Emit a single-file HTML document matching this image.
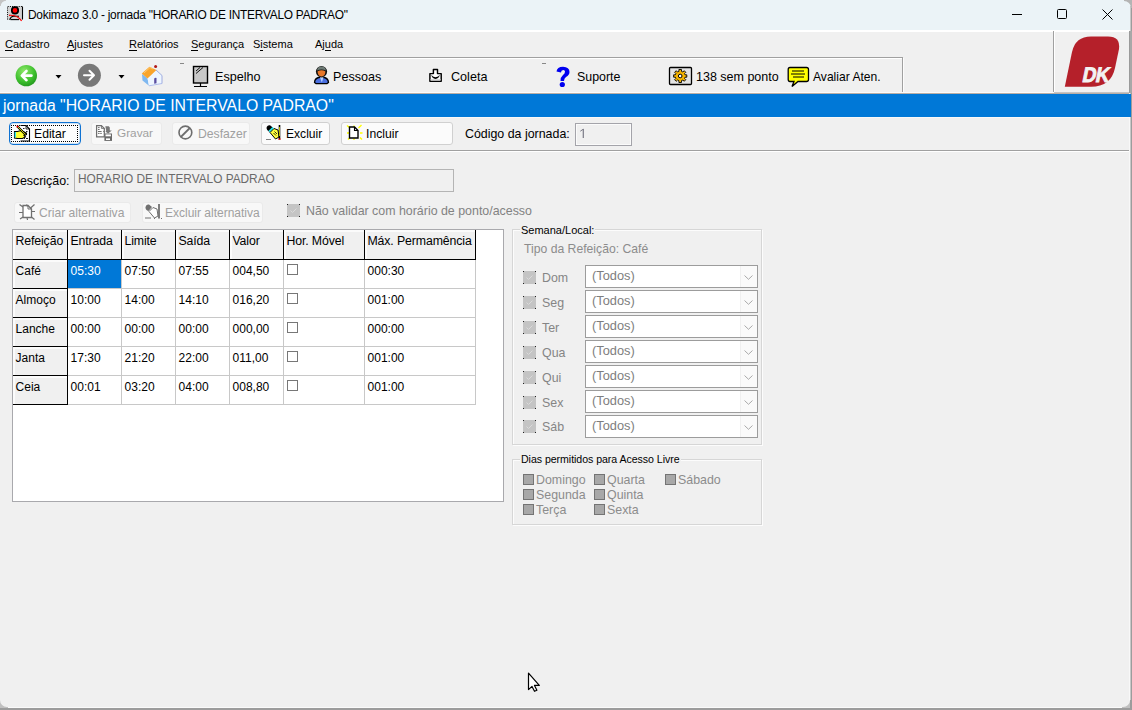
<!DOCTYPE html>
<html><head><meta charset="utf-8">
<style>
*{margin:0;padding:0;box-sizing:border-box}
html,body{width:1132px;height:710px;overflow:hidden;background:#f0f0f0}
body{position:relative;font-family:"Liberation Sans",sans-serif;font-size:12px;color:#000}
.a{position:absolute;white-space:nowrap}
svg{position:absolute;overflow:visible}
.mi{font-size:11px;top:38px}
.mi u{text-decoration:none;border-bottom:1px solid #000}
.tb{font-size:12.6px;top:70px}
.btn{position:absolute;height:23px;border:1px solid #d0d0d0;background:#fbfbfb;border-radius:3px}
.btn.dis{border-color:#eaeaea;background:#f8f8f8}
.gb{position:absolute;border:1px solid #d6d6d6;box-shadow:1px 1px 0 #fcfcfc,inset 1px 1px 0 #fcfcfc}
.cap{position:absolute;font-size:11px;background:#f0f0f0;padding:0 1px;white-space:nowrap}
.dis{color:#a0a0a0}
.cb{position:absolute;width:11px;height:11px;border:1px solid #777;background:#fff}
.combo{position:absolute;left:585px;width:173px;height:23px;background:#fff;border:1px solid #9c9c9c}
.combo span{position:absolute;left:6px;top:2px;color:#7e7e7e;font-size:12.8px}
.combo i{position:absolute;right:0;top:0;width:17px;height:21px;border-left:1px solid #f0f0f0;background:#fafafa}
.dchk{position:absolute;left:523px;width:13px;height:13px;background:#c4c4c4}
.dlab{position:absolute;left:542px;color:#858585;font-size:12.4px}
.ac{position:absolute;width:11px;height:11px;background:#a8a8a8;border:1px solid #747474}
.al{position:absolute;color:#8c8c8c;font-size:12.4px;white-space:nowrap}
</style></head><body>
<div class="a" style="left:0;top:0;width:1132px;height:30px;background:#ebf3f7"></div>
<svg style="left:6px;top:5px" width="18" height="17" viewBox="0 0 18 17">
<rect x="1.5" y="1.5" width="15" height="13.5" fill="#d2d2d2"/>
<path d="M1.5 14.5 V1.5 H16" fill="none" stroke="#000" stroke-width="1" stroke-dasharray="1 1.2"/>
<path d="M16.5 1.5 V14.5" stroke="#000" stroke-width="1.1"/>
<circle cx="9" cy="5.4" r="3.2" fill="#f00" stroke="#000" stroke-width="1.7"/>
<path d="M3.6 14.8 Q5 11.4 7.5 11.3 H13" fill="none" stroke="#000" stroke-width="1.1"/>
<path d="M4.5 14.6 H13" stroke="#000" stroke-width="1.1"/>
<path d="M3 10.3 Q11 9.6 15.6 15.8" fill="none" stroke="#f00" stroke-width="1.2"/>
</svg>
<div class="a" style="left:28px;top:8.2px;font-size:11.9px;letter-spacing:-0.24px">Dokimazo 3.0 - jornada "HORARIO DE INTERVALO PADRAO"</div>
<div class="a" style="left:1012px;top:14px;width:10px;height:1px;background:#000"></div>
<div class="a" style="left:1057px;top:9px;width:10px;height:10px;border:1px solid #000;border-radius:1.5px"></div>
<svg style="left:1102px;top:9px" width="11" height="11" viewBox="0 0 11 11"><path d="M0.5 0.5 L10.5 10.5 M10.5 0.5 L0.5 10.5" stroke="#000" stroke-width="1"/></svg>
<div class="a" style="left:0;top:30px;width:1132px;height:1.6px;background:#fff"></div>
<div class="a mi" style="left:5px"><u>C</u>adastro</div>
<div class="a mi" style="left:67px"><u>A</u>justes</div>
<div class="a mi" style="left:129px"><u>R</u>elatórios</div>
<div class="a mi" style="left:191px"><u>S</u>egurança</div>
<div class="a mi" style="left:253px">S<u>i</u>stema</div>
<div class="a mi" style="left:315px">Aj<u>u</u>da</div>
<div class="a" style="left:0;top:57px;width:903px;height:37px;border-top:1px solid #a0a0a0;border-right:1px solid #a0a0a0"></div>
<div class="a" style="left:903px;top:58px;width:1px;height:35px;background:#fcfcfc"></div>
<div class="a" style="left:0;top:58px;width:902px;height:1px;background:#fff"></div>
<div class="a" style="left:1053px;top:31px;width:77px;height:63px;border-left:1px solid #a0a0a0"></div>
<div class="a" style="left:1054px;top:31px;width:1px;height:62px;background:#fff"></div>
<svg style="left:15px;top:64px" width="23" height="23" viewBox="0 0 23 23">
<defs><radialGradient id="gg" cx="0.4" cy="0.3" r="0.8"><stop offset="0" stop-color="#8fe86a"/><stop offset="0.6" stop-color="#3cbf2c"/><stop offset="1" stop-color="#1c8c1a"/></radialGradient></defs>
<circle cx="11.3" cy="11.6" r="10.7" fill="url(#gg)"/>
<path d="M16.5 11.6 H7.5 M11.5 7 L6.8 11.6 L11.5 16.2" fill="none" stroke="#fff" stroke-width="2.6" stroke-linecap="round" stroke-linejoin="round"/>
</svg>
<svg style="left:55px;top:75px" width="7" height="4" viewBox="0 0 7 4"><path d="M0.5 0 H6.5 L3.5 3.5 Z" fill="#000"/></svg>
<svg style="left:77px;top:63px" width="24" height="24" viewBox="0 0 24 24">
<circle cx="12.4" cy="12.3" r="11.5" fill="#787878"/>
<path d="M7 12.3 H16.5 M12.5 7.8 L17 12.3 L12.5 16.8" fill="none" stroke="#fff" stroke-width="2" stroke-linecap="round" stroke-linejoin="round"/>
</svg>
<svg style="left:118px;top:75px" width="7" height="4" viewBox="0 0 7 4"><path d="M0.5 0 H6.5 L3.5 3.5 Z" fill="#000"/></svg>
<svg style="left:140px;top:64px" width="24" height="24" viewBox="0 0 24 24">
<path d="M2 10 L7.5 14.2 L9 21.8 L2.5 16.5 Z" fill="#7fb8f0"/>
<path d="M7.5 14.2 L16 6 L22 11.5 L22 19.5 L9 21.8 Z" fill="#eef6ff"/>
<path d="M16 6 L22 11.5 L22 19.5" fill="none" stroke="#8a9ad8" stroke-width="0.8"/>
<path d="M9 21.8 L22 19.5" fill="none" stroke="#9fb0e8" stroke-width="0.8"/>
<path d="M1.8 9.6 L9.4 2.7 L16.4 5.9 L7.5 14.5 Z" fill="#f9a52c"/>
<path d="M4 9 L10 3.5 L13 5" fill="none" stroke="#ffc870" stroke-width="1"/>
<circle cx="15.6" cy="2.6" r="1.5" fill="#b01818"/>
<path d="M14.2 14.5 Q15.3 13.5 16.5 14 V19.3 L14.2 19.8 Z" fill="#5a4ea0"/>
</svg>
<div class="a" style="left:180px;top:63px;width:4px;height:1px;background:#888"></div>
<div class="a" style="left:542px;top:63px;width:4px;height:1px;background:#888"></div>
<svg style="left:192px;top:65px" width="17" height="23" viewBox="0 0 17 23">
<rect x="1.5" y="1.5" width="14" height="16.5" fill="#c8c8c8" stroke="#000" stroke-width="1.4"/>
<path d="M4 6 L8 2.5 M4 8.5 L11 2.5" stroke="#000" stroke-width="0.9"/>
<path d="M8.5 18 V21.5 M2 21.5 H15" stroke="#000" stroke-width="1.2"/>
</svg>
<svg style="left:313px;top:65px" width="17" height="20" viewBox="0 0 17 20">
<path d="M1.5 17.5 Q1.5 12.5 8.5 12 Q15.5 12.5 15.5 17.5 L14 18.6 H3 Z" fill="#4a6fe0" stroke="#000" stroke-width="1.3"/>
<path d="M7 12.2 L8.8 17.5 L10.5 12.2 Z" fill="#b8d4ff"/>
<circle cx="8.5" cy="6.6" r="5.6" fill="#111"/>
<path d="M4 5.6 Q4.5 1.8 8.5 1.6 Q12.5 1.8 13 5.6 Q8.5 3.6 4 5.6 Z" fill="#6e7a74"/>
<path d="M4.6 6.2 Q8.5 4.5 12.4 6.2 Q12.6 11.2 8.5 11.4 Q4.4 11.2 4.6 6.2 Z" fill="#e8782a"/>
</svg>
<svg style="left:428px;top:68px" width="15" height="15" viewBox="0 0 15 15">
<path d="M5.4 1.5 H9.5 V5.6 H13.2 V13.2 H1.9 V5.6 H5.4 Z" fill="#fff" stroke="#000" stroke-width="1.45" stroke-linejoin="round"/>
<rect x="2.6" y="11" width="9.9" height="1.6" fill="#d8d8d8"/>
<path d="M3.3 6.8 Q4 10.8 7.5 11 Q11 10.8 11.8 6.8 Q10.5 9.2 7.5 9.2 Q4.6 9.2 3.3 6.8 Z" fill="#000"/>
</svg>
<svg style="left:555px;top:66px" width="16" height="22" viewBox="0 0 16 22">
<path d="M1.5 5.5 Q2 0.8 8 0.8 Q14.5 1 14.5 6 Q14.5 9 11 11 Q9 12.3 9 15 H5.5 Q5.5 11 8 9 Q10 7.5 10 5.5 Q10 4 8.2 4 Q6 4 6 6.5 Z" fill="#0000f0"/>
<circle cx="7.3" cy="18.5" r="2.6" fill="#0000f0"/>
</svg>
<svg style="left:668px;top:66px" width="25" height="20" viewBox="0 0 25 20">
<rect x="1.5" y="1.5" width="22" height="17" rx="1" fill="#e4e4e4" stroke="#000" stroke-width="1.3"/>
<g transform="translate(12.2 10)">
<g fill="#f5b400" stroke="#000" stroke-width="0.9">
<path d="M-1.3 -6.5 H1.3 V-4.6 L2.7 -4 L4 -5.3 L5.6 -3.7 L4.3 -2.4 L4.8 -1.2 H6.6 V1.2 H4.8 L4.3 2.4 L5.6 3.7 L4 5.3 L2.7 4 L1.3 4.6 V6.5 H-1.3 V4.6 L-2.7 4 L-4 5.3 L-5.6 3.7 L-4.3 2.4 L-4.8 1.2 H-6.6 V-1.2 H-4.8 L-4.3 -2.4 L-5.6 -3.7 L-4 -5.3 L-2.7 -4 L-1.3 -4.6 Z"/>
</g>
<circle r="1.8" fill="#fff" stroke="#000" stroke-width="1"/>
</g>
</svg>
<svg style="left:787px;top:66px" width="23" height="22" viewBox="0 0 23 22">
<path d="M3 1.5 H19.5 Q21.5 1.5 21.5 3.5 V13.5 Q21.5 15.5 19.5 15.5 H11 L5 20.5 L7 15.5 H3 Q1.2 15.5 1.2 13.5 V3.5 Q1.2 1.5 3 1.5 Z" fill="#ffff00" stroke="#000" stroke-width="1.3"/>
<path d="M5 5 H17 M4 8 H18 M6 11 H17" stroke="#000" stroke-width="1"/>
</svg>
<div class="a tb" style="left:215px;font-size:12.6px">Espelho</div>
<div class="a tb" style="left:333px;font-size:12.6px">Pessoas</div>
<div class="a tb" style="left:451px;font-size:12.6px">Coleta</div>
<div class="a tb" style="left:577px;font-size:12.4px">Suporte</div>
<div class="a tb" style="left:696px;font-size:12.5px">138 sem ponto</div>
<div class="a tb" style="left:813px;font-size:12.1px">Avaliar Aten.</div>
<svg style="left:1060px;top:34px" width="64" height="56" viewBox="0 0 64 56">
<path d="M4.8 52.8 L12 18 Q15.5 2.6 31 2.6 H48 Q60.5 2.6 59 15 L55 34 Q51 52.8 31 52.8 Z" fill="#b5202a"/>
<text x="0" y="0" transform="translate(21.5 48) scale(0.9 1) skewX(-13)" font-family="Liberation Sans" font-weight="bold" font-size="21" fill="#f2f2f2" stroke="#f2f2f2" stroke-width="0.9" letter-spacing="-0.3">DK</text>
</svg>
<div class="a" style="left:0;top:92px;width:1130px;height:1px;background:#fafafa"></div>
<div class="a" style="left:0;top:93px;width:1131px;height:1px;background:#b9aea6"></div>
<div class="a" style="left:0;top:94px;width:1131px;height:23px;background:#0078d7"></div>
<div class="a" style="left:0;top:117px;width:1130px;height:1px;background:#f8f8f8"></div>
<div class="a" style="left:3px;top:97px;color:#fff;font-size:15.8px">jornada "HORARIO DE INTERVALO PADRAO"</div>
<div class="btn" style="left:9px;top:122px;width:72px;border:1px solid #0f72d2;box-shadow:inset 0 0 0 1px rgba(40,130,220,0.22);background:#fdfdfd;border-radius:4px"></div>
<div class="a" style="left:11px;top:125px;width:67px;height:17px;border:1px dotted #000"></div>
<svg style="left:13px;top:124px" width="20" height="19" viewBox="0 0 20 19">
<path d="M7.5 1.5 H13 L16.5 5 V17 H7.5" fill="#fff" stroke="#000" stroke-width="1.1"/>
<path d="M13 1.5 V5 H16.5" fill="none" stroke="#000" stroke-width="0.8"/>
<path d="M10 4.5 H11.5 M13 7.5 H14.5 M11 14.5 H12 M13 14.5 H15" stroke="#000" stroke-width="0.9"/>
<path d="M1.5 7.5 H4.5 L8 6.5 L13.5 9 L13.5 10.5 L11 11.3 L12.5 12.8 L9.5 14.5 H4.5 L1.5 14 Z" fill="#ffff30" stroke="#000" stroke-width="1.1"/>
<rect x="1.6" y="8" width="1.4" height="5.5" fill="#30e8f0"/>
<path d="M4.2 2.2 L13 11" stroke="#000" stroke-width="2.2"/>
<path d="M4.8 2.8 L12.5 10.5" stroke="#ffff00" stroke-width="0.8"/>
<circle cx="4.4" cy="2.4" r="1" fill="#f00"/>
</svg>
<div class="a" style="left:34px;top:127px;font-size:12.2px">Editar</div>
<div class="btn dis" style="left:91px;top:122px;width:71px"></div>
<svg style="left:95px;top:124px" width="19" height="19" viewBox="0 0 19 19">
<path d="M1.6 1.6 H6.4 L9.3 4.4 V12.8 H1.6 Z" fill="#fff" stroke="#6e6e6e" stroke-width="1.25"/>
<path d="M6.4 1.6 V4.4 H9.3" fill="none" stroke="#6e6e6e" stroke-width="0.9"/>
<path d="M3 3.6 H4.6 M3 5.5 H4.6 M3 7.5 H6.6 M8 7.5 H8.8 M3 9.4 H4.6 M5.2 9.4 H6.8" stroke="#6e6e6e" stroke-width="1"/>
<path d="M10.3 2.2 H13.8 L14.8 3.5 V6.6 H16.8 L13.2 9.6 L10.6 7.8 L11.2 6.6 Z" fill="#777"/>
<rect x="9.4" y="9.5" width="7.6" height="7.4" fill="#6a6a6a"/>
<rect x="10.5" y="10.4" width="5.4" height="1.9" fill="#fff"/>
<rect x="11" y="14.4" width="4" height="1.6" fill="#fff"/>
</svg>
<div class="a dis" style="left:117px;top:126px;font-size:11.8px">Gravar</div>
<div class="btn dis" style="left:172px;top:122px;width:78px"></div>
<svg style="left:177px;top:125px" width="17" height="16" viewBox="0 0 17 16">
<circle cx="8.4" cy="7.5" r="6.4" fill="none" stroke="#6e6e6e" stroke-width="1.6"/>
<path d="M12.8 3 L3.8 12" stroke="#6e6e6e" stroke-width="1.8"/>
</svg>
<div class="a dis" style="left:198px;top:127px;font-size:12.2px">Desfazer</div>
<div class="btn" style="left:261px;top:122px;width:69px"></div>
<svg style="left:265px;top:124px" width="17" height="17" viewBox="0 0 17 17">
<path d="M1.5 4 Q2 1 5 1.3 L8 3.8 L4.5 8 Q1.5 6.5 1.5 4 Z" fill="#000"/>
<path d="M3.5 6.8 L7.5 3 L9 4.5 L5 8.5 Z" fill="#20e8f0"/>
<path d="M5 8.5 L9 4.5 L13 6 L14 13 L10.5 15 Z" fill="#ffff40" stroke="#000" stroke-width="1"/>
<path d="M14.5 1 V15.5" stroke="#000" stroke-width="1.6"/>
<path d="M14.5 3 V12" stroke="#ffff00" stroke-width="0.7"/>
<path d="M8.5 9 L11 11.5 M9.5 7.5 L12 10" stroke="#000" stroke-width="0.8"/>
<path d="M1 15.5 H6" stroke="#808080" stroke-width="1"/>
<rect x="13.4" y="14.5" width="2.2" height="1.2" fill="#f00"/>
</svg>
<div class="a" style="left:286px;top:127px;font-size:12.1px">Excluir</div>
<div class="btn" style="left:341px;top:122px;width:112px"></div>
<svg style="left:345px;top:124px" width="20" height="18" viewBox="0 0 20 18">
<path d="M2 1.5 L5 4 M9 1.5 V3 M16.5 1 L13.5 4 M2 9 H4.5 M15 9 H17.5 M3 15.5 L5 13.5 M9 14.5 V16 M15 13.5 L17 15.5" stroke="#ffff00" stroke-width="1.4"/>
<path d="M4.5 3 H9.5 L13 6.5 V14 H4.5 Z" fill="#fff" stroke="#000" stroke-width="1.4"/>
<path d="M9.5 3 V6.5 H13" fill="none" stroke="#000" stroke-width="1.1"/>
</svg>
<div class="a" style="left:366px;top:127px;font-size:12.2px">Incluir</div>
<div class="a" style="left:465px;top:127px;font-size:12.4px">Código da jornada:</div>
<div class="a" style="left:575px;top:123px;width:57px;height:23px;border:1px solid #a4a4aa;background:#f0f0f0;box-shadow:inset 0 0 0 1px #fbfbfb"></div>
<svg style="left:579px;top:128px" width="8" height="12" viewBox="0 0 8 12"><path d="M4.3 1 V10" stroke="#7a7a86" stroke-width="1.2"/><path d="M1.3 3.2 L4.3 1.2" stroke="#7a7a86" stroke-width="1"/></svg>
<div class="a" style="left:0;top:150px;width:1130px;height:1px;background:#a0a0a0"></div>
<div class="a" style="left:0;top:151px;width:1130px;height:1px;background:#fff"></div>
<div class="a" style="left:11px;top:174px;font-size:12.4px">Descrição:</div>
<div class="a" style="left:74px;top:169px;width:380px;height:23px;border:1px solid #b4b4b4;background:#f0f0f0"></div>
<div class="a" style="left:78px;top:172px;color:#6a6a6a;font-size:11.85px">HORARIO DE INTERVALO PADRAO</div>
<div class="btn dis" style="left:14px;top:202px;width:117px;height:21px"></div>
<svg style="left:17px;top:203px" width="20" height="19" viewBox="0 0 20 19">
<path d="M6 2.5 H11 L14.5 6 V14.5 H6 Z" fill="#fff" stroke="#707070" stroke-width="1.3"/>
<path d="M11 2.5 V6 H14.5" fill="none" stroke="#707070" stroke-width="1"/>
<path d="M2.5 1.5 L6 4 M9.5 1.5 L10.5 3.5 M17.5 1.5 L13 5.5 M2 9.5 H6 M14.5 8.5 H18 M3 16 L6 14 M10 14.5 L10.5 17 M14.5 14 L17.5 16.5" stroke="#707070" stroke-width="1.2"/>
</svg>
<div class="a dis" style="left:39px;top:206px;font-size:12.1px">Criar alternativa</div>
<div class="btn dis" style="left:142px;top:202px;width:121px;height:21px"></div>
<svg style="left:144px;top:203px" width="19" height="17" viewBox="0 0 19 17">
<path d="M1.5 4.5 Q2 1 5 1.5 L8 4 L4.5 8 Q1.5 7 1.5 4.5 Z" fill="#707070"/>
<path d="M5 8.5 L9 4.5 L13 6 L14 13 L10.5 15 Z" fill="#fff" stroke="#707070" stroke-width="1"/>
<path d="M15 1 V15.5" stroke="#707070" stroke-width="1.8"/>
<path d="M1 15 H7 M10 15.5 H11 M17 15.5 H18" stroke="#707070" stroke-width="1.1"/>
</svg>
<div class="a dis" style="left:165px;top:206px;font-size:12px">Excluir alternativa</div>
<div class="dchk" style="left:287px;top:204px"></div>
<svg style="left:287px;top:204px" width="13" height="13" viewBox="0 0 13 13"><path d="M3.5 6.5 L5.5 8.5 L9.5 4.5" fill="none" stroke="#dadada" stroke-width="1"/><rect x="0" y="0" width="1" height="1" fill="#222"/><rect x="12" y="0" width="1" height="1" fill="#222"/><rect x="0" y="12" width="1" height="1" fill="#222"/><rect x="12" y="12" width="1" height="1" fill="#222"/></svg>
<div class="a" style="left:306px;top:204px;color:#828282;font-size:12.4px">Não validar com horário de ponto/acesso</div>
<div class="a" style="left:12px;top:229px;width:492px;height:273px;background:#fff;border:1px solid #a9a9ad"></div>
<div class="a" style="left:13px;top:230px;width:54px;height:29px;background:#f0f0f0;border-left:2px solid #fbfbfb;border-top:2px solid #fbfbfb"></div>
<div class="a" style="left:68px;top:230px;width:53px;height:29px;background:#f0f0f0;border-left:2px solid #fbfbfb;border-top:2px solid #fbfbfb"></div>
<div class="a" style="left:122px;top:230px;width:53px;height:29px;background:#f0f0f0;border-left:2px solid #fbfbfb;border-top:2px solid #fbfbfb"></div>
<div class="a" style="left:176px;top:230px;width:53px;height:29px;background:#f0f0f0;border-left:2px solid #fbfbfb;border-top:2px solid #fbfbfb"></div>
<div class="a" style="left:230px;top:230px;width:53px;height:29px;background:#f0f0f0;border-left:2px solid #fbfbfb;border-top:2px solid #fbfbfb"></div>
<div class="a" style="left:284px;top:230px;width:80px;height:29px;background:#f0f0f0;border-left:2px solid #fbfbfb;border-top:2px solid #fbfbfb"></div>
<div class="a" style="left:365px;top:230px;width:110px;height:29px;background:#f0f0f0;border-left:2px solid #fbfbfb;border-top:2px solid #fbfbfb"></div>
<div class="a" style="left:13px;top:260px;width:54px;height:28px;background:#f0f0f0;border-left:2px solid #fbfbfb;border-top:2px solid #fbfbfb"></div>
<div class="a" style="left:13px;top:289px;width:54px;height:28px;background:#f0f0f0;border-left:2px solid #fbfbfb;border-top:2px solid #fbfbfb"></div>
<div class="a" style="left:13px;top:318px;width:54px;height:28px;background:#f0f0f0;border-left:2px solid #fbfbfb;border-top:2px solid #fbfbfb"></div>
<div class="a" style="left:13px;top:347px;width:54px;height:28px;background:#f0f0f0;border-left:2px solid #fbfbfb;border-top:2px solid #fbfbfb"></div>
<div class="a" style="left:13px;top:376px;width:54px;height:28px;background:#f0f0f0;border-left:2px solid #fbfbfb;border-top:2px solid #fbfbfb"></div>
<div class="a" style="left:68px;top:260px;width:53px;height:28px;background:#0078d7"></div>
<div class="a" style="left:121px;top:260px;width:1px;height:145px;background:#c8c8c8"></div>
<div class="a" style="left:175px;top:260px;width:1px;height:145px;background:#c8c8c8"></div>
<div class="a" style="left:229px;top:260px;width:1px;height:145px;background:#c8c8c8"></div>
<div class="a" style="left:283px;top:260px;width:1px;height:145px;background:#c8c8c8"></div>
<div class="a" style="left:364px;top:260px;width:1px;height:145px;background:#c8c8c8"></div>
<div class="a" style="left:475px;top:260px;width:1px;height:145px;background:#c8c8c8"></div>
<div class="a" style="left:68px;top:288px;width:408px;height:1px;background:#c8c8c8"></div>
<div class="a" style="left:68px;top:317px;width:408px;height:1px;background:#c8c8c8"></div>
<div class="a" style="left:68px;top:346px;width:408px;height:1px;background:#c8c8c8"></div>
<div class="a" style="left:68px;top:375px;width:408px;height:1px;background:#c8c8c8"></div>
<div class="a" style="left:68px;top:404px;width:408px;height:1px;background:#c8c8c8"></div>
<div class="a" style="left:67px;top:230px;width:1px;height:30px;background:#000"></div>
<div class="a" style="left:121px;top:230px;width:1px;height:30px;background:#000"></div>
<div class="a" style="left:175px;top:230px;width:1px;height:30px;background:#000"></div>
<div class="a" style="left:229px;top:230px;width:1px;height:30px;background:#000"></div>
<div class="a" style="left:283px;top:230px;width:1px;height:30px;background:#000"></div>
<div class="a" style="left:364px;top:230px;width:1px;height:30px;background:#000"></div>
<div class="a" style="left:475px;top:230px;width:1px;height:30px;background:#000"></div>
<div class="a" style="left:67px;top:260px;width:1px;height:145px;background:#000"></div>
<div class="a" style="left:13px;top:259px;width:463px;height:1px;background:#000"></div>
<div class="a" style="left:13px;top:288px;width:55px;height:1px;background:#000"></div>
<div class="a" style="left:13px;top:317px;width:55px;height:1px;background:#000"></div>
<div class="a" style="left:13px;top:346px;width:55px;height:1px;background:#000"></div>
<div class="a" style="left:13px;top:375px;width:55px;height:1px;background:#000"></div>
<div class="a" style="left:13px;top:404px;width:55px;height:1px;background:#000"></div>
<div class="a" style="left:15.4px;top:234.4px;font-size:12.3px;letter-spacing:-0.1px">Refeição</div>
<div class="a" style="left:70.4px;top:234.4px;font-size:12.3px;letter-spacing:-0.1px">Entrada</div>
<div class="a" style="left:124.4px;top:234.4px;font-size:12.3px;letter-spacing:-0.1px">Limite</div>
<div class="a" style="left:178.4px;top:234.4px;font-size:12.3px;letter-spacing:-0.1px">Saída</div>
<div class="a" style="left:232.4px;top:234.4px;font-size:12.3px;letter-spacing:-0.1px">Valor</div>
<div class="a" style="left:286.4px;top:234.4px;font-size:12.3px;letter-spacing:-0.1px">Hor. Móvel</div>
<div class="a" style="left:367.4px;top:234.4px;font-size:12.3px;letter-spacing:-0.1px">Máx. Permamência</div>
<div class="a" style="left:15.6px;top:264px;color:#000">Café</div>
<div class="a" style="left:70.6px;top:264px;color:#fff">05:30</div>
<div class="a" style="left:124.6px;top:264px;color:#000">07:50</div>
<div class="a" style="left:178.6px;top:264px;color:#000">07:55</div>
<div class="a" style="left:232.6px;top:264px;color:#000">004,50</div>
<div class="cb" style="left:287px;top:264px"></div>
<div class="a" style="left:367.6px;top:264px;color:#000">000:30</div>
<div class="a" style="left:15.6px;top:293px;color:#000">Almoço</div>
<div class="a" style="left:70.6px;top:293px;color:#000">10:00</div>
<div class="a" style="left:124.6px;top:293px;color:#000">14:00</div>
<div class="a" style="left:178.6px;top:293px;color:#000">14:10</div>
<div class="a" style="left:232.6px;top:293px;color:#000">016,20</div>
<div class="cb" style="left:287px;top:293px"></div>
<div class="a" style="left:367.6px;top:293px;color:#000">001:00</div>
<div class="a" style="left:15.6px;top:322px;color:#000">Lanche</div>
<div class="a" style="left:70.6px;top:322px;color:#000">00:00</div>
<div class="a" style="left:124.6px;top:322px;color:#000">00:00</div>
<div class="a" style="left:178.6px;top:322px;color:#000">00:00</div>
<div class="a" style="left:232.6px;top:322px;color:#000">000,00</div>
<div class="cb" style="left:287px;top:322px"></div>
<div class="a" style="left:367.6px;top:322px;color:#000">000:00</div>
<div class="a" style="left:15.6px;top:351px;color:#000">Janta</div>
<div class="a" style="left:70.6px;top:351px;color:#000">17:30</div>
<div class="a" style="left:124.6px;top:351px;color:#000">21:20</div>
<div class="a" style="left:178.6px;top:351px;color:#000">22:00</div>
<div class="a" style="left:232.6px;top:351px;color:#000">011,00</div>
<div class="cb" style="left:287px;top:351px"></div>
<div class="a" style="left:367.6px;top:351px;color:#000">001:00</div>
<div class="a" style="left:15.6px;top:380px;color:#000">Ceia</div>
<div class="a" style="left:70.6px;top:380px;color:#000">00:01</div>
<div class="a" style="left:124.6px;top:380px;color:#000">03:20</div>
<div class="a" style="left:178.6px;top:380px;color:#000">04:00</div>
<div class="a" style="left:232.6px;top:380px;color:#000">008,80</div>
<div class="cb" style="left:287px;top:380px"></div>
<div class="a" style="left:367.6px;top:380px;color:#000">001:00</div>
<div class="gb" style="left:512px;top:229px;width:250px;height:216px"></div>
<div class="cap" style="left:520px;top:224px;padding-bottom:2px">Semana/Local:</div>
<div class="a" style="left:524px;top:242px;color:#8c8c8c;font-size:12.2px">Tipo da Refeição: Café</div>
<div class="dchk" style="top:271px"></div>
<svg style="left:523px;top:271px" width="13" height="13" viewBox="0 0 13 13"><path d="M3.5 6.5 L5.5 8.5 L9.5 4.5" fill="none" stroke="#dadada" stroke-width="1"/><rect x="0" y="0" width="1" height="1" fill="#222"/><rect x="12" y="0" width="1" height="1" fill="#222"/><rect x="0" y="12" width="1" height="1" fill="#222"/><rect x="12" y="12" width="1" height="1" fill="#222"/></svg>
<div class="dlab" style="top:271px">Dom</div>
<div class="combo" style="top:265px"><span>(Todos)</span><i></i></div>
<svg style="left:744px;top:275px" width="9" height="5" viewBox="0 0 9 5"><path d="M0.5 0.5 L4.5 4.3 L8.5 0.5" fill="none" stroke="#a0a0a0" stroke-width="0.9"/></svg>
<div class="dchk" style="top:296px"></div>
<svg style="left:523px;top:296px" width="13" height="13" viewBox="0 0 13 13"><path d="M3.5 6.5 L5.5 8.5 L9.5 4.5" fill="none" stroke="#dadada" stroke-width="1"/><rect x="0" y="0" width="1" height="1" fill="#222"/><rect x="12" y="0" width="1" height="1" fill="#222"/><rect x="0" y="12" width="1" height="1" fill="#222"/><rect x="12" y="12" width="1" height="1" fill="#222"/></svg>
<div class="dlab" style="top:296px">Seg</div>
<div class="combo" style="top:290px"><span>(Todos)</span><i></i></div>
<svg style="left:744px;top:300px" width="9" height="5" viewBox="0 0 9 5"><path d="M0.5 0.5 L4.5 4.3 L8.5 0.5" fill="none" stroke="#a0a0a0" stroke-width="0.9"/></svg>
<div class="dchk" style="top:321px"></div>
<svg style="left:523px;top:321px" width="13" height="13" viewBox="0 0 13 13"><path d="M3.5 6.5 L5.5 8.5 L9.5 4.5" fill="none" stroke="#dadada" stroke-width="1"/><rect x="0" y="0" width="1" height="1" fill="#222"/><rect x="12" y="0" width="1" height="1" fill="#222"/><rect x="0" y="12" width="1" height="1" fill="#222"/><rect x="12" y="12" width="1" height="1" fill="#222"/></svg>
<div class="dlab" style="top:321px">Ter</div>
<div class="combo" style="top:315px"><span>(Todos)</span><i></i></div>
<svg style="left:744px;top:325px" width="9" height="5" viewBox="0 0 9 5"><path d="M0.5 0.5 L4.5 4.3 L8.5 0.5" fill="none" stroke="#a0a0a0" stroke-width="0.9"/></svg>
<div class="dchk" style="top:346px"></div>
<svg style="left:523px;top:346px" width="13" height="13" viewBox="0 0 13 13"><path d="M3.5 6.5 L5.5 8.5 L9.5 4.5" fill="none" stroke="#dadada" stroke-width="1"/><rect x="0" y="0" width="1" height="1" fill="#222"/><rect x="12" y="0" width="1" height="1" fill="#222"/><rect x="0" y="12" width="1" height="1" fill="#222"/><rect x="12" y="12" width="1" height="1" fill="#222"/></svg>
<div class="dlab" style="top:346px">Qua</div>
<div class="combo" style="top:340px"><span>(Todos)</span><i></i></div>
<svg style="left:744px;top:350px" width="9" height="5" viewBox="0 0 9 5"><path d="M0.5 0.5 L4.5 4.3 L8.5 0.5" fill="none" stroke="#a0a0a0" stroke-width="0.9"/></svg>
<div class="dchk" style="top:371px"></div>
<svg style="left:523px;top:371px" width="13" height="13" viewBox="0 0 13 13"><path d="M3.5 6.5 L5.5 8.5 L9.5 4.5" fill="none" stroke="#dadada" stroke-width="1"/><rect x="0" y="0" width="1" height="1" fill="#222"/><rect x="12" y="0" width="1" height="1" fill="#222"/><rect x="0" y="12" width="1" height="1" fill="#222"/><rect x="12" y="12" width="1" height="1" fill="#222"/></svg>
<div class="dlab" style="top:371px">Qui</div>
<div class="combo" style="top:365px"><span>(Todos)</span><i></i></div>
<svg style="left:744px;top:375px" width="9" height="5" viewBox="0 0 9 5"><path d="M0.5 0.5 L4.5 4.3 L8.5 0.5" fill="none" stroke="#a0a0a0" stroke-width="0.9"/></svg>
<div class="dchk" style="top:396px"></div>
<svg style="left:523px;top:396px" width="13" height="13" viewBox="0 0 13 13"><path d="M3.5 6.5 L5.5 8.5 L9.5 4.5" fill="none" stroke="#dadada" stroke-width="1"/><rect x="0" y="0" width="1" height="1" fill="#222"/><rect x="12" y="0" width="1" height="1" fill="#222"/><rect x="0" y="12" width="1" height="1" fill="#222"/><rect x="12" y="12" width="1" height="1" fill="#222"/></svg>
<div class="dlab" style="top:396px">Sex</div>
<div class="combo" style="top:390px"><span>(Todos)</span><i></i></div>
<svg style="left:744px;top:400px" width="9" height="5" viewBox="0 0 9 5"><path d="M0.5 0.5 L4.5 4.3 L8.5 0.5" fill="none" stroke="#a0a0a0" stroke-width="0.9"/></svg>
<div class="dchk" style="top:420px"></div>
<svg style="left:523px;top:420px" width="13" height="13" viewBox="0 0 13 13"><path d="M3.5 6.5 L5.5 8.5 L9.5 4.5" fill="none" stroke="#dadada" stroke-width="1"/><rect x="0" y="0" width="1" height="1" fill="#222"/><rect x="12" y="0" width="1" height="1" fill="#222"/><rect x="0" y="12" width="1" height="1" fill="#222"/><rect x="12" y="12" width="1" height="1" fill="#222"/></svg>
<div class="dlab" style="top:420px">Sáb</div>
<div class="combo" style="top:415px"><span>(Todos)</span><i></i></div>
<svg style="left:744px;top:425px" width="9" height="5" viewBox="0 0 9 5"><path d="M0.5 0.5 L4.5 4.3 L8.5 0.5" fill="none" stroke="#a0a0a0" stroke-width="0.9"/></svg>
<div class="gb" style="left:512px;top:459px;width:250px;height:66px"></div>
<div class="cap" style="left:520px;top:453px;font-size:10.6px;letter-spacing:-0.05px">Dias permitidos para Acesso Livre</div>
<div class="ac" style="left:523px;top:474px"></div>
<div class="al" style="left:536px;top:473px">Domingo</div>
<div class="ac" style="left:523px;top:489px"></div>
<div class="al" style="left:536px;top:488px">Segunda</div>
<div class="ac" style="left:523px;top:504px"></div>
<div class="al" style="left:536px;top:503px">Terça</div>
<div class="ac" style="left:594px;top:474px"></div>
<div class="al" style="left:607px;top:473px">Quarta</div>
<div class="ac" style="left:594px;top:489px"></div>
<div class="al" style="left:607px;top:488px">Quinta</div>
<div class="ac" style="left:594px;top:504px"></div>
<div class="al" style="left:607px;top:503px">Sexta</div>
<div class="ac" style="left:665px;top:474px"></div>
<div class="al" style="left:678px;top:473px">Sábado</div>
<div class="a" style="left:1129px;top:30px;width:1px;height:678px;background:#f8f8f8"></div>
<div class="a" style="left:1130px;top:6px;width:1px;height:704px;background:#c8c8c8"></div>
<div class="a" style="left:1131px;top:6px;width:1px;height:704px;background:#9c9c9c"></div>
<div class="a" style="left:1129px;top:94px;width:2px;height:23px;background:#0078d7"></div>
<div class="a" style="left:1129px;top:31px;width:3px;height:62px;background:#a8a8a8;border-left:1px solid #9a9a9a"></div>
<div class="a" style="left:1054px;top:92px;width:75px;height:1px;background:#c4c4c4"></div>
<div class="a" style="left:0;top:707px;width:1130px;height:1px;background:#fafafa"></div>
<svg style="left:1124px;top:0" width="8" height="8" viewBox="0 0 8 8"><path d="M0 0 H8 V8 H7 A7 7 0 0 0 0 1 Z" fill="#b4b4b4"/></svg>
<svg style="left:0;top:0" width="6" height="6" viewBox="0 0 6 6"><path d="M0 0 H6 V0.8 A5.2 5.2 0 0 0 0.8 6 H0 Z" fill="#c4c4c4"/></svg>
<svg style="left:0;top:700px" width="8" height="10" viewBox="0 0 8 10"><path d="M0 0 V8 H8 V10 H0 Z" fill="#9c9c9c"/><path d="M0 0 A7 7 0 0 0 7 7 H8 V8 H0 Z" fill="#c0c0c0"/></svg>
<svg style="left:1122px;top:700px" width="10" height="10" viewBox="0 0 10 10"><path d="M8 0 V8 H0 V10 H10 V0 Z" fill="#9c9c9c"/><path d="M8 0 A7 7 0 0 1 1 7 H0 V8 H8 Z" fill="#c0c0c0"/></svg>
<div class="a" style="left:0;top:708px;width:1132px;height:2px;background:#9c9c9c"></div>
<svg style="left:527px;top:672px" width="16" height="22" viewBox="0 0 16 22">
<path d="M1.5 1.2 V17.6 L5 14.4 L7.5 19.3 L9.9 18.2 L7.5 13.4 H12.3 Z" fill="#fff" stroke="#000" stroke-width="1.2" stroke-linejoin="round"/>
</svg>
</body></html>
